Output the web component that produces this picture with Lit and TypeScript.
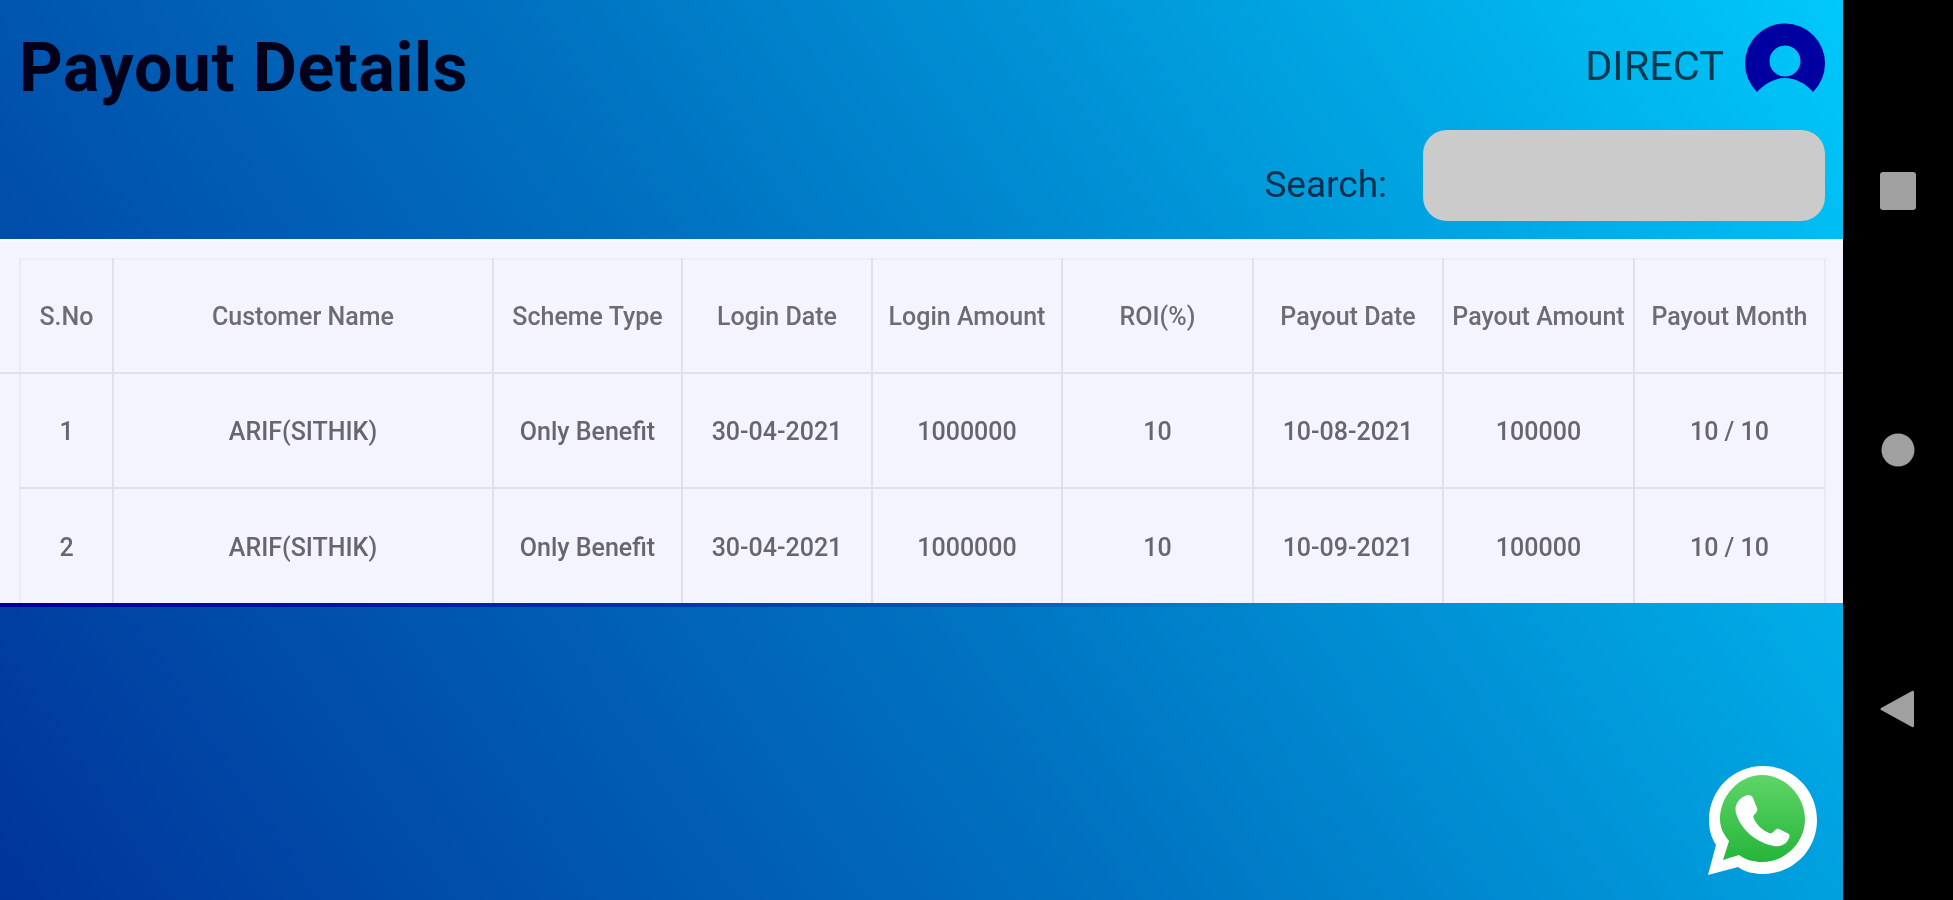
import { LitElement, html, css } from "lit";
import { customElement } from "lit/decorators.js";

const HEAD = ["S.No", "Customer Name", "Scheme Type", "Login Date", "Login Amount", "ROI(%)", "Payout Date", "Payout Amount", "Payout Month"];
const ROWS = [
  ["1", "ARIF(SITHIK)", "Only Benefit", "30-04-2021", "1000000", "10", "10-08-2021", "100000", "10 / 10"],
  ["2", "ARIF(SITHIK)", "Only Benefit", "30-04-2021", "1000000", "10", "10-09-2021", "100000", "10 / 10"],
];
const WIDTHS = [20, 93, 380, 189, 190, 190, 191, 190, 191, 191, 18];

@customElement("app-root")
export class AppRoot extends LitElement {
  static styles = css`
    :host { display: block; width: 1953px; height: 900px; overflow: hidden; font-family: Roboto, "Liberation Sans", sans-serif; background: #000; }
    .frame { display: flex; height: 900px; }
    .app { position: relative; width: 1843px; height: 900px; display: flex; flex-direction: column;
      background: linear-gradient(56deg, #00349a 0%, #0070bf 45%, #00a8e4 80%, #00c8fa 100%); }
    .top { height: 239px; box-sizing: border-box; padding: 22px 18px 0 20px; display: flex; flex-direction: column; filter: blur(0.6px); }
    .title-row { display: flex; justify-content: space-between; align-items: flex-start; height: 108px; }
    h1 { margin: 8px 0 0; font-size: 68px; line-height: 76px; font-weight: 700; letter-spacing: 0.6px; margin-left: -1px; color: #00001a; }
    .user { display: flex; align-items: flex-start; gap: 21px; }
    .direct { font-size: 41.5px; line-height: 72px; padding-top: 8px; color: #003850; }
    .avatar { display: block; width: 80px; height: 73px; margin-top: 1px; }
    .search { display: flex; justify-content: flex-end; align-items: center; gap: 36px; }
    .search label { font-size: 37px; padding-top: 17px; color: #00304e; }
    .field { width: 402px; height: 91px; border-radius: 24px; background: #cccbcb; }
    .panel { background: #f4f4fe; height: 364px; box-sizing: border-box; padding-top: 16px; border-top: 3px solid #fafaff; overflow: hidden; }
    .seam { height: 4px; background: linear-gradient(90deg, #00009a 0%, rgba(0, 0, 154, 0.6) 25%, rgba(0, 0, 154, 0) 70%); }
    table { border-collapse: collapse; table-layout: fixed; width: 1843px; filter: blur(0.6px); }
    td, th { padding: 0; text-align: center; font-size: 25px; font-weight: 500; border: 2px solid #e0e0e8; box-sizing: border-box; white-space: nowrap; }
    th { height: 114px; color: #6c6c72; }
    td { height: 115px; padding-top: 2px; color: #66666c; }
    .edge { border-width: 0; }
    thead .edge { border-bottom: 2px solid #e0e0e8; }
    tbody tr:last-child td { border-bottom: 0; }
    thead th:not(.edge) { border-top-color: #eeeef6; }
    tr > :nth-child(2) { border-left-color: #eaeaf2; }
    tr > :nth-child(10) { border-right-color: #eaeaf2; }
    .whats { position: absolute; left: 1708px; top: 765px; width: 110px; height: 111px; filter: blur(0.6px); }
    .nav { width: 110px; display: flex; flex-direction: column; align-items: center; justify-content: center; gap: 219px; background: #000; }
    .nav svg { display: block; width: 40px; height: 40px; filter: blur(0.6px); }
  `;

  render() {
    return html`
      <div class="frame">
        <div class="app">
          <header class="top">
            <div class="title-row">
              <h1>Payout Details</h1>
              <div class="user">
                <span class="direct">DIRECT</span>
                <svg class="avatar" viewBox="0 0 80 73">
                  <path fill="#0000a0" fill-rule="evenodd" d="M12 69A40 40 0 1 1 68 69C60 60 50 55 40 55S20 60 12 69ZM40 22.500a15.500 15.500 0 1 0 0 31 15.500 15.500 0 0 0 0-31Z"/>
                </svg>
              </div>
            </div>
            <div class="search">
              <label>Search:</label>
              <div class="field"></div>
            </div>
          </header>
          <section class="panel">
            <table>
              <colgroup>${WIDTHS.map((w) => html`<col style="width:${w}px" />`)}</colgroup>
              <thead>
                <tr>
                  <th class="edge"></th>
                  ${HEAD.map((h) => html`<th>${h}</th>`)}
                  <th class="edge"></th>
                </tr>
              </thead>
              <tbody>
                ${ROWS.map((r) => html`<tr>
                  <td class="edge"></td>
                  ${r.map((c) => html`<td>${c}</td>`)}
                  <td class="edge"></td>
                </tr>`)}
              </tbody>
            </table>
          </section>
          <div class="seam"></div>
          <svg class="whats" viewBox="0 0 110 111">
            <defs><linearGradient id="g" x1="0" y1="0" x2="0" y2="1"><stop offset="0" stop-color="#5fd568"/><stop offset="1" stop-color="#25b53a"/></linearGradient></defs>
            <path fill="#fff" d="M0 110 8 80C3 72 1 64 1 55 1 25 25 1 55 1s54 24 54 54-24 54-54 54c-9 0-18-2-25-7Z"/>
            <path fill="url(#g)" d="M15 95 21 76C15 69 12 62 12 54 12 31 31 10 54 10s43 21 43 44-19 43-43 43c-8 0-16-2-23-7Z"/>
            <path fill="#fff" d="M37 31c3-2 7-1 8 2l4 10c1 2 0 4-2 6-2 2-2 3-1 5 3 6 8 11 15 14 2 1 3 0 4-1 3-3 4-4 6-3l8 4c3 1 3 3 2 5-2 6-8 9-15 8C50 78 33 66 28 48c-2-7 2-14 9-17Z"/>
          </svg>
        </div>
        <nav class="nav">
          <svg viewBox="0 0 40 40"><rect x="2" y="1" width="36" height="38" rx="3" fill="#a0a0a0"/></svg>
          <svg viewBox="0 0 40 40"><circle cx="20" cy="20" r="16.500" fill="#a0a0a0"/></svg>
          <svg viewBox="0 0 40 40"><path d="M36 3v34a1.500 1.500 0 0 1-2 1L4 21.500a1.500 1.500 0 0 1 0-3L34 2a1.500 1.500 0 0 1 2 1Z" fill="#a0a0a0"/></svg>
        </nav>
      </div>
    `;
  }
}
